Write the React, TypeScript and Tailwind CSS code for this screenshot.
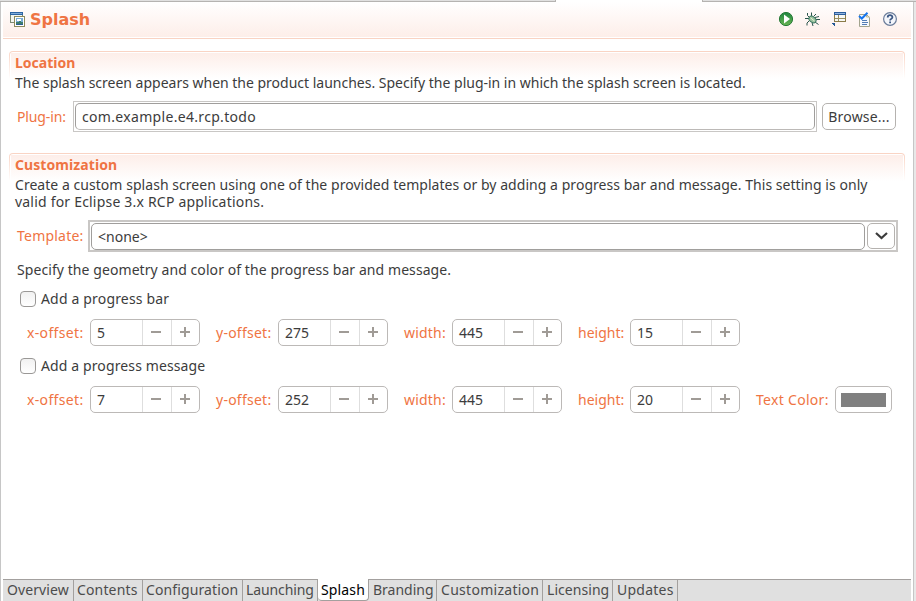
import type { ReactNode } from 'react';

const orange = 'text-[#ef7443]';

function Label({ children, className = '' }: { children: ReactNode; className?: string }) {
  return <span className={`block whitespace-nowrap ${orange} ${className}`}>{children}</span>;
}

function Spinner({ value }: { value: string }) {
  return (
    <div className="flex h-[27px] w-[110px] shrink-0 overflow-hidden rounded-[5px] border border-[#bcb9b7] bg-white text-[#3c3c3c]">
      <span className="w-[51px] pl-[6px] leading-[26px]">{value}</span>
      <span className="flex w-[29px] items-center border-l border-[#dedede] pl-[8px]">
        <svg width="11" height="11" viewBox="0 0 11 11" shapeRendering="crispEdges"><path d="M0 4h10v2H0z" fill="#a09b96" /></svg>
      </span>
      <span className="flex w-[28px] items-center border-l border-[#dedede] pl-[8px]">
        <svg width="11" height="11" viewBox="0 0 11 11" shapeRendering="crispEdges"><path d="M0 4h10v2H0zM4 0h2v10H4z" fill="#a09b96" /></svg>
      </span>
    </div>
  );
}

function Check({ children, className = '' }: { children: ReactNode; className?: string }) {
  return (
    <div className="flex h-4 items-center pl-[20px]">
      <span className="h-4 w-4 rounded-[4px] border border-[#9a9896] bg-linear-to-b from-[#f1f1f1] to-white" />
      <span className={`-mt-[2px] ml-[5px] whitespace-nowrap ${className}`}>{children}</span>
    </div>
  );
}

function Geometry({ values, color }: { values: string[]; color?: boolean }) {
  return (
    <div className="flex h-[27px] items-center pl-[27px]">
      <Label className="w-[63px] tracking-[0.35px]">x-offset:</Label>
      <Spinner value={values[0]} />
      <Label className="ml-4 w-[62px] tracking-[0.25px]">y-offset:</Label>
      <Spinner value={values[1]} />
      <Label className="ml-4 w-[48px] tracking-[0.2px]">width:</Label>
      <Spinner value={values[2]} />
      <Label className="ml-4 w-[52px]">height:</Label>
      <Spinner value={values[3]} />
      {color && (
        <>
          <Label className="ml-4 w-[79px] tracking-[0.3px]">Text Color:</Label>
          <div className="flex h-[27px] w-[57px] items-center justify-center rounded-[5px] border border-[#bcb9b7] bg-white">
            <div className="h-[14px] w-[45px] bg-[#808080]" />
          </div>
        </>
      )}
    </div>
  );
}

function SectionHead({ title, className = '' }: { title: string; className?: string }) {
  return (
    <div className="h-7 rounded-t-[4px] bg-linear-to-b from-[#f9d3c3] to-white px-px pt-px">
      <div className="h-full rounded-t-[3px] bg-white p-px pb-0">
        <div className="h-full bg-linear-to-b from-[#fdeee9] to-white pl-[4px]">
          <h2 className={`font-bold leading-[20px] ${orange} ${className}`}>{title}</h2>
        </div>
      </div>
    </div>
  );
}

function SplashIcon() {
  return (
    <svg width="16" height="16" viewBox="0 0 16 16" shapeRendering="crispEdges">
      <path d="M.5 .5h12v10H.5z" fill="#f4f6ef" stroke="#7d8a72" />
      <path d="M0 0h13v3H0z" fill="#2d66a5" /><path d="M1 1h11v1H1z" fill="#80acd8" />
      <path d="M4.500 4.500h10v10h-10z" fill="#fff" stroke="#8c8a5c" />
      <path d="M6 6h7v7H6z" fill="#79add7" /><path d="M7 7h4v2H7z" fill="#fff" />
      <path d="M6 10h3v-1h2v1h2v2H6z" fill="#3f7d6e" /><path d="M6 12h7v1H6z" fill="#2b5d94" />
    </svg>
  );
}

function RunIcon() {
  return (
    <svg width="16" height="16" viewBox="0 0 16 16">
      <defs><linearGradient id="run" x1="0" y1="0" x2="0" y2="1"><stop offset="0" stopColor="#1f8540" /><stop offset="1" stopColor="#6ab653" /></linearGradient></defs>
      <circle cx="8" cy="7" r="6.600" fill="url(#run)" stroke="#277a38" />
      <path d="M6 2.500v9L12 7z" fill="#fff" />
    </svg>
  );
}

function DebugIcon() {
  return (
    <svg width="16" height="16" viewBox="0 0 16 16" fill="none" stroke="#2b544c" strokeWidth="1">
      <path d="M5.500 5.500 3.500 3.500V1M7.500 4V.500M9.500 4.500 12 2M5 6.500H1M5.500 8.500 3 11v2.500M8 10.500l1 3.500M11 10l3.500 2.500M12 7.500h4M11 5.500l4-1" />
      <ellipse cx="8.500" cy="7.500" rx="3.900" ry="2.800" transform="rotate(38 8.500 7.500)" fill="#9cc3a0" stroke="#3d7a63" />
      <path d="m6.500 5.800 4 3.200" stroke="#e2f0cf" />
    </svg>
  );
}

function LayoutIcon() {
  return (
    <svg width="16" height="16" viewBox="0 0 16 16" shapeRendering="crispEdges">
      <path d="M4.500 .5h11v9h-11z" fill="#f7f8f4" stroke="#8a7b48" />
      <path d="M4 0h12v3H4z" fill="#2c5d9c" /><path d="M5 1h10v1H5z" fill="#8fb3de" />
      <path d="M8 3h1v6H8zM5 6h10v1H5z" fill="#9a8f62" />
      <path d="M1 11h4v4z" fill="#245894" />
    </svg>
  );
}

function ValidateIcon() {
  return (
    <svg width="16" height="16" viewBox="0 0 16 16">
      <path d="M3.500 2.500h7l3 3v9h-10z" fill="#f5f8fd" stroke="#a3a48e" />
      <path d="M10.500 1.500v3.500h3" fill="none" stroke="#c2b98c" />
      <path d="M6 8.500h5M6 10.500h6M6 12.500h5" stroke="#537db5" />
      <path d="m3 4 2.800 2.500L11.500 .8" fill="none" stroke="#1675ee" strokeWidth="2" />
    </svg>
  );
}

function HelpIcon() {
  return (
    <svg width="16" height="16" viewBox="0 0 16 16">
      <circle cx="8" cy="7" r="6.400" fill="#f4f6fb" stroke="#6b7d9a" strokeWidth="1.200" />
      <path d="M5.700 5.500C5.700 2.400 10.500 2.600 10.400 5.200c0 1.600-2.300 1.700-2.300 3.200M8.100 9.600v1.700" fill="none" stroke="#3a5683" strokeWidth="1.800" />
    </svg>
  );
}

const tabs = [
  { name: 'Overview', cls: 'w-[71px] pl-[4px] tracking-[0.1px]' },
  { name: 'Contents', cls: 'w-[69px] pl-[3px] tracking-[0.15px]' },
  { name: 'Configuration', cls: 'w-[100px] pl-[3px] tracking-[0.12px]' },
  { name: 'Launching', cls: 'w-[75px] pl-[3px] -tracking-[0.1px]' },
  { name: 'Splash', cls: 'w-[51px] pl-[3px] tracking-[0.15px]' },
  { name: 'Branding', cls: 'w-[68px] pl-[4px]' },
  { name: 'Customization', cls: 'w-[106px] pl-[4px] tracking-[0.28px]' },
  { name: 'Licensing', cls: 'w-[70px] pl-[4px] tracking-[0.05px]' },
  { name: 'Updates', cls: 'w-[65px] pl-[4px] tracking-[0.25px]' },
];

export default function App() {
  return (
    <div className="flex h-[601px] w-[916px] flex-col overflow-hidden bg-[#e8e8e8] font-['Noto_Sans','Open_Sans',sans-serif] text-[14px] text-[#3c3c3c]">
      <div className="flex h-[2px] shrink-0">
        <div className="w-[556px] border-b border-r border-[#b5b3b1] bg-[#e0e0e0]" />
        <div className="w-[146px] bg-white" />
        <div className="flex-1 border-b border-l border-[#b5b3b1] bg-[#e0e0e0]" />
      </div>
      <div className="flex h-[599px] w-[914px] flex-col border-x border-[#c6c6c6] bg-white px-[2px]">
        <header className="h-[37px] shrink-0 border-b border-[#f9d3c3] pb-px">
          <div className="flex h-[35px] items-center bg-linear-to-b from-white to-[#fdeee9] pl-[7px] pt-px">
            <SplashIcon />
            <h1 className={`ml-[4px] font-['DejaVu_Sans',sans-serif] text-[16px] font-bold leading-none ${orange}`}>Splash</h1>
            <div className="ml-auto flex gap-[10px] pr-[13px]">
              <RunIcon /><DebugIcon /><LayoutIcon /><ValidateIcon /><HelpIcon />
            </div>
          </div>
        </header>

        <main className="flex flex-1 flex-col">
          <section className="mt-[12px] h-[102px] pl-[6px] pr-[6px]">
            <SectionHead title="Location" />
            <p className="-mt-[6px] whitespace-nowrap pl-[6px] leading-[19px] -tracking-[0.008px]">
              The splash screen appears when the product launches. Specify the plug-in in which the splash screen is located.
            </p>
            <div className="mt-[9px] flex items-center pl-[8px]">
              <Label className="w-[56px] -tracking-[0.12px]">Plug-in:</Label>
              <div className="h-[31px] w-[744px] border border-[#c9c7c5] p-px">
                <div className="h-[27px] rounded-[5px] border border-[#a09e9c] border-b-[#bcb9b7] pl-[6px] leading-[26px] tracking-[0.32px]">com.example.e4.rcp.todo</div>
              </div>
              <button className="ml-[5px] h-[27px] w-[74px] whitespace-nowrap rounded-[5px] border border-[#b5b2af] bg-white tracking-[0.2px]">Browse...</button>
            </div>
          </section>

          <section className="pl-[6px] pr-[6px]">
            <SectionHead title="Customization" className="tracking-[0.08px]" />
            <div className="-mt-[5px] whitespace-nowrap pl-[6px] leading-[17px]">
              <p className="tracking-[0.042px]">
                Create a custom splash screen using one of the provided templates or by adding a progress bar and message. This setting is only
              </p>
              <p className="tracking-[0.2px]">valid for Eclipse 3.x RCP applications.</p>
            </div>
            <div className="mt-[10px] flex items-center pl-[8px]">
              <Label className="-mt-[2px] w-[71px] tracking-[0.22px]">Template:</Label>
              <div className="flex h-[32px] w-[810px] border-2 border-[#c9c7c5] p-px">
                <div className="h-[27px] w-[774px] rounded-[5px] border border-[#a09e9c] pl-[6px] leading-[26px]">&lt;none&gt;</div>
                <div className="ml-[2px] flex h-[26px] w-[28px] items-center justify-center rounded-[5px] border border-[#b5b2af]">
                  <svg width="13" height="8" viewBox="0 0 13 8"><path d="m1 1 5.500 5L12 1" fill="none" stroke="#3c3c3c" strokeWidth="2.200" /></svg>
                </div>
              </div>
            </div>
          </section>

          <p className="mt-[8px] whitespace-nowrap pl-[14px] leading-[20px] tracking-[0.075px]">Specify the geometry and color of the progress bar and message.</p>
          <div className="-ml-[3px] mt-[11px] flex flex-col">
            <Check className="tracking-[0.17px]">Add a progress bar</Check>
            <div className="h-[12px]" />
            <Geometry values={['5', '275', '445', '15']} />
            <div className="h-[12px]" />
            <Check className="tracking-[0.12px]">Add a progress message</Check>
            <div className="h-[12px]" />
            <Geometry values={['7', '252', '445', '20']} color />
          </div>
        </main>

        <nav className="flex h-[22px] shrink-0 bg-[#e0e0e0] text-[#4c4c4c]">
          {tabs.map((t) => (
            <div
              key={t.name}
              className={`h-[22px] shrink-0 whitespace-nowrap border-r border-[#a3a09e] ${t.cls} ${t.name === 'Splash' ? 'rounded-b-[4px] border-b bg-white leading-[22px] text-black' : 'border-t leading-[20px]'}`}
            >
              {t.name}
            </div>
          ))}
          <div className="flex-1 border-t border-[#a3a09e]" />
        </nav>
      </div>
    </div>
  );
}
